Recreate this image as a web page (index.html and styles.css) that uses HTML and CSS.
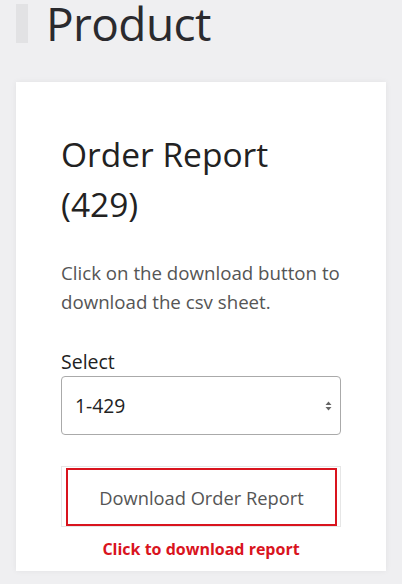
FILE: index.html
```html
<!DOCTYPE html>
<html>
<head>
<meta charset="utf-8">
<link rel="stylesheet" href="styles.css">
</head>
<body>
<div class="page">
  <div class="title-row">
    <span class="title-bar"></span>
    <h1 class="title">Product</h1>
  </div>
  <div class="card">
    <h2 class="card-title">Order Report<br>(429)</h2>
    <p class="desc">Click on the download button to download the csv sheet.</p>
    <label class="label">Select</label>
    <div class="select">
      <span class="select-value">1-429</span>
      <svg class="select-arrows" width="7" height="12" viewBox="0 0 7 12"><path d="M3.5 1.5 L6.5 5 H0.5 Z M3.5 10.5 L6.5 7 H0.5 Z" fill="#666"/></svg>
    </div>
    <div class="btn-wrap">
      <div class="btn">Download Order Report</div>
    </div>
    <div class="hint">Click to download report</div>
  </div>
</div>
</body>
</html>
```
FILE: styles.css
```css
* { box-sizing: border-box; }
html, body { margin: 0; padding: 0; }
body {
  background: #efeff1;
  font-family: "Open Sans", "Noto Sans", sans-serif;
  width: 402px;
  height: 584px;
  overflow: hidden;
}
.page { padding: 0 16px; }
.title-row {
  display: flex;
  align-items: flex-start;
  height: 82px;
}
.title-bar {
  width: 12px;
  height: 39px;
  margin-top: 4px;
  background: #e2e2e4;
}
.title {
  margin: 0 0 0 18px;
  font-weight: 400;
  font-size: 46px;
  line-height: 46px;
  color: #2a2a2e;
  letter-spacing: -0.6px;
}
.card {
  background: #fff;
  box-shadow: 0 0 6px rgba(0,0,0,0.06);
  padding: 47px 45px 14px 45px;
  height: 489px;
}
.card-title {
  margin: 0;
  font-weight: 400;
  font-size: 33.5px;
  line-height: 50px;
  color: #222;
}
.desc {
  margin: 29px 0 0 0;
  font-size: 18.7px;
  line-height: 29px;
  color: #555;
}
.label {
  display: block;
  margin-top: 33px;
  font-size: 19.5px;
  line-height: 26px;
  color: #222;
}
.select {
  display: flex;
  align-items: center;
  justify-content: space-between;
  height: 59px;
  border: 1px solid #aaa;
  border-radius: 4px;
  padding: 0 8px 0 13px;
  margin-top: 1px;
}
.select-value {
  font-size: 19.3px;
  color: #222;
}
.btn-wrap {
  margin-top: 31px;
  border: 1px solid #e6e6e6;
  padding: 1px 3px 0 4px;
}
.btn {
  border: 2px solid #d9141e;
  height: 58px;
  display: flex;
  align-items: center;
  justify-content: center;
  font-size: 18.3px;
  color: #555;
}
.hint {
  text-align: center;
  margin-top: 11px;
  font-size: 16px;
  font-weight: 700;
  color: #d9141e;
}
```
